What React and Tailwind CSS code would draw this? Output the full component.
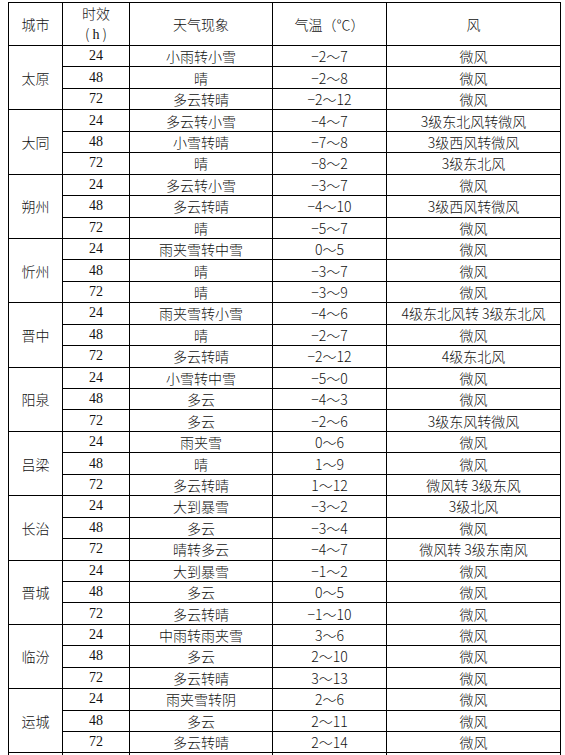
const data = [
  ["太原", [
    ["24", "小雨转小雪", "−2～7", "微风"],
    ["48", "晴", "−2～8", "微风"],
    ["72", "多云转晴", "−2～12", "微风"],
  ]],
  ["大同", [
    ["24", "多云转小雪", "−4～7", "3级东北风转微风"],
    ["48", "小雪转晴", "−7～8", "3级西风转微风"],
    ["72", "晴", "−8～2", "3级东北风"],
  ]],
  ["朔州", [
    ["24", "多云转小雪", "−3～7", "微风"],
    ["48", "多云转晴", "−4～10", "3级西风转微风"],
    ["72", "晴", "−5～7", "微风"],
  ]],
  ["忻州", [
    ["24", "雨夹雪转中雪", "0～5", "微风"],
    ["48", "晴", "−3～7", "微风"],
    ["72", "晴", "−3～9", "微风"],
  ]],
  ["晋中", [
    ["24", "雨夹雪转小雪", "−4～6", "4级东北风转 3级东北风"],
    ["48", "晴", "−2～7", "微风"],
    ["72", "多云转晴", "−2～12", "4级东北风"],
  ]],
  ["阳泉", [
    ["24", "小雪转中雪", "−5～0", "微风"],
    ["48", "多云", "−4～3", "微风"],
    ["72", "多云", "−2～6", "3级东风转微风"],
  ]],
  ["吕梁", [
    ["24", "雨夹雪", "0～6", "微风"],
    ["48", "晴", "1～9", "微风"],
    ["72", "多云转晴", "1～12", "微风转 3级东风"],
  ]],
  ["长治", [
    ["24", "大到暴雪", "−3～2", "3级北风"],
    ["48", "多云", "−3～4", "微风"],
    ["72", "晴转多云", "−4～7", "微风转 3级东南风"],
  ]],
  ["晋城", [
    ["24", "大到暴雪", "−1～2", "微风"],
    ["48", "多云", "0～5", "微风"],
    ["72", "多云转晴", "−1～10", "微风"],
  ]],
  ["临汾", [
    ["24", "中雨转雨夹雪", "3～6", "微风"],
    ["48", "多云", "2～10", "微风"],
    ["72", "多云转晴", "3～13", "微风"],
  ]],
  ["运城", [
    ["24", "雨夹雪转阴", "2～6", "微风"],
    ["48", "多云", "2～11", "微风"],
    ["72", "多云转晴", "2～14", "微风"],
  ]],
];

const cjk = "font-['Noto_Sans_CJK_SC',sans-serif] font-light";
const serif = "font-['Liberation_Serif',serif]";
const cell = "border border-black p-0 text-center align-middle h-[21.45px] leading-[20px]";

export default function App() {
  return (
    <div className="bg-white w-[565px] h-[755px] overflow-hidden pt-[2px] pl-2 text-[14px] text-[#111]">
      <table className="border-collapse table-fixed w-[552px]">
        <colgroup>
          <col className="w-[54px]" />
          <col className="w-[67px]" />
          <col className="w-[143px]" />
          <col className="w-[114px]" />
          <col className="w-[174px]" />
        </colgroup>
        <thead>
          <tr>
            <th className={`${cell} ${cjk} h-[42px]`}>城市</th>
            <th className={`${cell} ${cjk} h-[42px]`}>
              <div>时效</div>
              <div>
                <span className="pl-[4px]">(</span>
                <span className={`${serif} px-[3px]`}>h</span>
                <span className="pr-[4px]">)</span>
              </div>
            </th>
            <th className={`${cell} ${cjk} h-[42px]`}>天气现象</th>
            <th className={`${cell} ${cjk} h-[42px]`}>气温（℃）</th>
            <th className={`${cell} ${cjk} h-[42px]`}>风</th>
          </tr>
        </thead>
        <tbody>
          {data.map(([city, rows]) =>
            rows.map((r, i) => (
              <tr key={city + i}>
                {i === 0 && (
                  <td rowSpan={3} className={`${cell} ${cjk}`}>{city}</td>
                )}
                <td className={`${cell} ${serif}`}>{r[0]}</td>
                <td className={`${cell} ${cjk}`}>{r[1]}</td>
                <td className={`${cell} ${cjk}`}>{r[2]}</td>
                <td className={`${cell} ${cjk}`}>{r[3]}</td>
              </tr>
            ))
          )}
          <tr>
            <td className={cell}></td>
            <td className={cell}></td>
            <td className={cell}></td>
            <td className={cell}></td>
            <td className={cell}></td>
          </tr>
        </tbody>
      </table>
    </div>
  );
}
